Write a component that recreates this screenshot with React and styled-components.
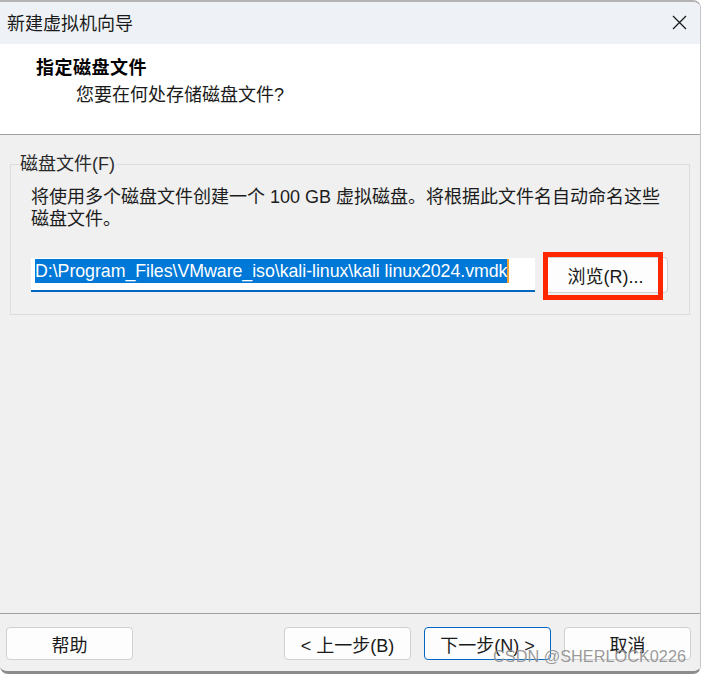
import React from 'react'
import styled, {createGlobalStyle} from 'styled-components'

const GlobalStyle = createGlobalStyle`
  html, body {
    margin: 0;
    padding: 0;
    background: #ffffff;
  }
  * {
    box-sizing: border-box;
  }
`

const Window = styled.div`
  width: 701px;
  height: 674px;
  display: flex;
  flex-direction: column;
  border-top: 2px solid #b4b4b4;
  border-right: 1px solid #c4c4c4;
  border-bottom: 3px solid #8c8c8c;
  border-radius: 0 8px 8px 8px;
  overflow: hidden;
  font-family: "Liberation Sans", "Noto Sans CJK SC", sans-serif;
  color: #1c1c1c;
`

const TitleBar = styled.div`
  height: 42px;
  flex-shrink: 0;
  display: flex;
  align-items: center;
  justify-content: space-between;
  padding: 0 13px 2px 7px;
  background: #eef2f6;
  font-family: "Noto Sans CJK SC", sans-serif;
  font-size: 18px;
  color: #1a1a1a;
`

const Header = styled.div`
  height: 91px;
  flex-shrink: 0;
  background: #ffffff;
  border-bottom: 1px solid #a0a0a0;
  padding: 10px 0 0 36px;
`

const Heading = styled.div`
  font-family: "Noto Sans CJK SC", sans-serif;
  font-weight: 700;
  font-size: 18px;
  line-height: 24px;
  letter-spacing: 0.5px;
  color: #000;
`

const SubHeading = styled.div`
  margin: 5px 0 0 40px;
  font-size: 18px;
  line-height: 24px;
  color: #1a1a1a;
`

const Body = styled.div`
  flex: 1;
  background: #f0f0f0;
  padding: 18px 10px 0 10px;
`

const Group = styled.fieldset`
  margin: 0;
  padding: 0 20px 21px 20px;
  border: 1px solid #dcdcdc;
  min-width: 0;
`

const Legend = styled.legend`
  margin-left: -12px;
  padding: 0 1px;
  font-size: 18px;
  line-height: 22px;
  color: #2a2a2a;
`

const Description = styled.p`
  margin: 11px 0 0 0;
  font-size: 18px;
  line-height: 22px;
  color: #1c1c1c;
`

const PathRow = styled.div`
  display: flex;
  align-items: flex-start;
  gap: 8px;
  margin-top: 28px;
`

const PathInput = styled.div`
  width: 504px;
  height: 34px;
  padding: 1px 0 0 4px;
  background: #ffffff;
  border-bottom: 2px solid #0067c0;
  font-size: 17.8px;
  line-height: 24px;
  white-space: nowrap;
  overflow: hidden;
`

const Selected = styled.span`
  display: inline-block;
  background: #0078d7;
  color: #ffffff;
  letter-spacing: -0.05px;
  border-right: 2px solid #f0a030;
`

const BrowseWrap = styled.div`
  position: relative;
  margin-top: -1px;
`

const Button = styled.button`
  width: ${p => p.$width || 127}px;
  height: ${p => p.$height || 33}px;
  padding: 0;
  background: #fdfdfd;
  border: 1px solid ${p => (p.$primary ? '#0067c0' : '#d0d0d0')};
  border-radius: 4px;
  font-family: "Liberation Sans", "Noto Sans CJK SC", sans-serif;
  font-size: 18px;
  color: #1a1a1a;
  display: flex;
  align-items: center;
  justify-content: center;
`

const Highlight = styled.div`
  position: absolute;
  left: 0;
  top: -5px;
  width: 120px;
  height: 48px;
  border: 5px solid #ff2600;
  pointer-events: none;
`

const Footer = styled.div`
  height: 58px;
  flex-shrink: 0;
  position: relative;
  display: flex;
  align-items: flex-start;
  padding: 13px 9px 0 6px;
  background: #f0f0f0;
  border-top: 1px solid #a0a0a0;
`

const Nav = styled.div`
  margin-left: auto;
  display: flex;
  gap: 13px;
`

const Watermark = styled.div`
  position: absolute;
  right: 14px;
  top: 33px;
  font-family: "Liberation Sans", sans-serif;
  font-size: 16.3px;
  color: rgba(120, 120, 120, 0.75);
  text-shadow: 0 0 1px rgba(255, 255, 255, 0.6);
  pointer-events: none;
`

function CloseIcon() {
  return (
    <svg width="15" height="15" viewBox="0 0 15 15">
      <path d="M1 1 L14 14 M14 1 L1 14" stroke="#1a1a1a" strokeWidth="1.3" fill="none" />
    </svg>
  )
}

export default function App() {
  return (
    <>
      <GlobalStyle />
      <Window>
        <TitleBar>
          <span>新建虚拟机向导</span>
          <CloseIcon />
        </TitleBar>
        <Header>
          <Heading>指定磁盘文件</Heading>
          <SubHeading>您要在何处存储磁盘文件?</SubHeading>
        </Header>
        <Body>
          <Group>
            <Legend>磁盘文件(F)</Legend>
            <Description>
              将使用多个磁盘文件创建一个 100 GB 虚拟磁盘。将根据此文件名自动命名这些磁盘文件。
            </Description>
            <PathRow>
              <PathInput>
                <Selected>D:\Program_Files\VMware_iso\kali-linux\kali linux2024.vmdk</Selected>
              </PathInput>
              <BrowseWrap>
                <Button $width={125} $height={36}>浏览(R)...</Button>
                <Highlight />
              </BrowseWrap>
            </PathRow>
          </Group>
        </Body>
        <Footer>
          <Button>帮助</Button>
          <Nav>
            <Button>&lt; 上一步(B)</Button>
            <Button $primary>下一步(N) &gt;</Button>
            <Button>取消</Button>
          </Nav>
          <Watermark>CSDN @SHERLOCK0226</Watermark>
        </Footer>
      </Window>
    </>
  )
}
